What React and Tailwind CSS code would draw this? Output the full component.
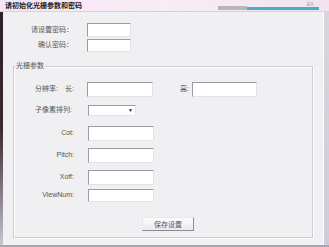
import React from 'react';

const font = "font-['Liberation_Sans','Noto_Sans_CJK_SC',sans-serif]";
const inputCls = 'bg-white border border-[#9c9aa3] border-r-[#e4e3e8] border-b-[#e4e3e8]';

const Field = ({ label, w = 'w-[66px]', h = 'h-[15px]', mt = 'mt-0', labelW = 'w-[52px]' }) => (
  <div className={`flex items-center ${mt}`}>
    <div className={`${labelW} text-right text-[7px] text-[#555]`}>{label}</div>
    <div className={`ml-[14px] ${w} ${h} ${inputCls}`} />
  </div>
);

export default function App() {
  return (
    <div className={`w-[329px] h-[247px] flex flex-col bg-[#dcd8e4] ${font}`}>
      {/* title bar */}
      <div className="h-[12px] flex items-center bg-linear-to-r from-[#f6e6f4] via-[#f8ecf6] to-[#f1e4ef] border-b border-[#d8d0dc] relative">
        <span className="ml-[5px] text-[7px] leading-none text-[#222] font-bold">请初始化光栅参数和密码</span>
        <div className="absolute left-[218px] top-[6px] w-[29px] h-[4px] bg-[#b9b5bd]" />
        <div className="absolute left-[247px] top-[7px] w-[72px] h-[3px] bg-[#3fb3c4]" />
        <span className="absolute left-[307px] top-[1px] text-[5px] text-[#999]">EX</span>
      </div>

      <div className="flex flex-1 min-h-0">
        <div className="w-[3px] bg-linear-to-b from-[#2a2228] via-[#3a2a30] to-[#c9c5d4]" />
        <div className="flex-1 bg-[#f0eff2] flex flex-col">
          <Field label="请设置密码：" w="w-[44px]" h="h-[14px]" mt="mt-[11px]" labelW="w-[70px]" />
          <Field label="确认密码：" w="w-[44px]" h="h-[13px]" mt="mt-[2px]" labelW="w-[70px]" />

          {/* group box */}
          <div className="relative ml-[10px] mt-[14px] w-[300px] h-[172px] border border-[#cdcbd2] shadow-[inset_1px_1px_0_#ffffff,1px_1px_0_#ffffff] flex flex-col">
            <span className="absolute left-[1px] top-[-5px] px-[1px] bg-[#f0eff2] text-[7px] leading-none text-[#555]">光栅参数</span>

            <div className="flex items-center mt-[15px]">
              <div className="w-[60px] flex items-center text-[7px] text-[#555]">
                <span className="ml-[21px]">分辨率:</span>
                <span className="ml-auto">长:</span>
              </div>
              <div className={`ml-[13px] w-[66px] h-[15px] ${inputCls}`} />
              <span className="ml-[27px] text-[7px] text-[#555]">高:</span>
              <div className={`ml-[3px] w-[65px] h-[15px] ${inputCls}`} />
            </div>

            <div className="flex items-center mt-[8px]">
              <span className="ml-[21px] w-[53px] text-[7px] text-[#555]">子像素排列:</span>
              <div className={`w-[48px] h-[11px] ${inputCls} flex items-center justify-end pr-[2px]`}>
                <span className="text-[5px] leading-none text-[#222]">▼</span>
              </div>
            </div>

            <Field label="Cot:" mt="mt-[10px]" labelW="w-[60px]" />
            <Field label="Pitch:" mt="mt-[7px]" labelW="w-[60px]" />
            <Field label="Xoff:" mt="mt-[7px]" labelW="w-[60px]" />
            <Field label="ViewNum:" h="h-[13px]" mt="mt-[4px]" labelW="w-[60px]" />

            <div className="flex justify-center mt-[15px] pl-[10px]">
              <button className="w-[52px] h-[14px] bg-linear-to-b from-[#fbfbfc] to-[#ebeaee] border border-[#e8e7ec] border-r-[#8c8a94] border-b-[#8c8a94] text-[7px] text-[#555] leading-none">
                保存设置
              </button>
            </div>
          </div>
        </div>
        <div className="w-[6px] bg-linear-to-b from-[#d8d4e0] to-[#cfcbd9] border-l border-[#ffffff]" />
      </div>
      <div className="h-[2px] bg-[#a9a6b2]" />
    </div>
  );
}
